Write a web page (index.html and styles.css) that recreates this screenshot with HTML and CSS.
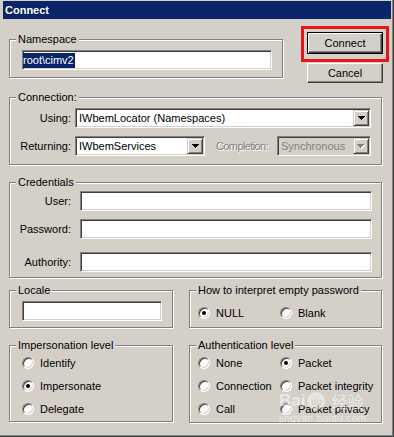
FILE: index.html
```html
<!DOCTYPE html>
<html lang="en">
<head>
  <meta charset="UTF-8" />
  <meta name="viewport" content="width=device-width, initial-scale=1.0"/>
  <title>Connect</title>
  <link rel="stylesheet" href="styles.css">
</head>
<body>

<div class="window">
  <div class="titlebar">Connect</div>

  <div class="content">
    <div class="top-row">
      <fieldset class="group ns-group">
        <legend>Namespace</legend>
        <div class="body ns-body">
          <div class="field ns-field"><span class="sel">root\cimv2</span></div>
        </div>
      </fieldset>

      <div class="buttons">
        <div class="highlight">
          <div class="btn btn-default">Connect</div>
        </div>
        <div class="btn btn-cancel">Cancel</div>
      </div>
    </div>

    <fieldset class="group conn-group">
      <legend>Connection:</legend>
      <div class="body conn-body">
        <div class="row">
          <span class="lbl">Using:</span>
          <div class="combo combo-using">
            <span class="combo-text">IWbemLocator (Namespaces)</span>
            <span class="combo-btn">
              <svg width="7" height="4" viewBox="0 0 7 4"><path d="M0 0h7v1H0zM1 1h5v1H1zM2 2h3v1H2zM3 3h1v1H3z" fill="#000"/></svg>
            </span>
          </div>
        </div>
        <div class="row row-ret">
          <span class="lbl">Returning:</span>
          <div class="combo combo-ret">
            <span class="combo-text">IWbemServices</span>
            <span class="combo-btn">
              <svg width="7" height="4" viewBox="0 0 7 4"><path d="M0 0h7v1H0zM1 1h5v1H1zM2 2h3v1H2zM3 3h1v1H3z" fill="#000"/></svg>
            </span>
          </div>
          <span class="lbl-disabled">Completion:</span>
          <div class="combo combo-compl disabled">
            <span class="combo-text">Synchronous</span>
            <span class="combo-btn">
              <svg width="8" height="5" viewBox="0 0 8 5"><path d="M1 1h7v1H1zM2 2h5v1H2zM3 3h3v1H3zM4 4h1v1H4z" fill="#fff"/><path d="M0 0h7v1H0zM1 1h5v1H1zM2 2h3v1H2zM3 3h1v1H3z" fill="#808080"/></svg>
            </span>
          </div>
        </div>
      </div>
    </fieldset>

    <fieldset class="group cred-group">
      <legend>Credentials</legend>
      <div class="body cred-body">
        <div class="row row-user">
          <span class="lbl lbl-cred">User:</span>
          <div class="field cred-field"></div>
        </div>
        <div class="row row-pass">
          <span class="lbl lbl-cred">Password:</span>
          <div class="field cred-field"></div>
        </div>
        <div class="row row-auth">
          <span class="lbl lbl-cred">Authority:</span>
          <div class="field cred-field"></div>
        </div>
      </div>
    </fieldset>

    <div class="pair pair-1">
      <fieldset class="group left-group small">
        <legend>Locale</legend>
        <div class="body locale-body">
          <div class="field locale-field"></div>
        </div>
      </fieldset>
      <fieldset class="group right-group small">
        <legend>How to interpret empty password</legend>
        <div class="body radio-grid pw-body">
          <div class="opt"><span class="radio on"></span>NULL</div>
          <div class="opt"><span class="radio"></span>Blank</div>
        </div>
      </fieldset>
    </div>

    <div class="pair pair-2">
      <fieldset class="group left-group tall">
        <legend>Impersonation level</legend>
        <div class="body radio-list imp-body">
          <div class="opt"><span class="radio"></span>Identify</div>
          <div class="opt"><span class="radio on"></span>Impersonate</div>
          <div class="opt"><span class="radio"></span>Delegate</div>
        </div>
      </fieldset>
      <fieldset class="group right-group tall auth-group">
        <legend>Authentication level</legend>
        <div class="body radio-grid auth-body">
          <div class="opt"><span class="radio"></span>None</div>
          <div class="opt"><span class="radio on"></span>Packet</div>
          <div class="opt"><span class="radio"></span>Connection</div>
          <div class="opt"><span class="radio"></span>Packet integrity</div>
          <div class="opt"><span class="radio"></span>Call</div>
          <div class="opt"><span class="radio"></span>Packet privacy</div>
        </div>
      </fieldset>
    </div>
  </div>

  <!-- watermark from the screenshot -->
  <div class="watermark">
    <div class="wm-logo"><span>Bai</span><span class="wm-paw">du</span><span class="wm-cn">经验</span></div>
    <div class="wm-url">jingyan.baidu.com</div>
  </div>
</div>

</body>
</html>
```

FILE: styles.css
```css
body {
  margin: 0;
  background: #d4d0c8;
  font-family: "Liberation Sans", Arial, sans-serif;
  font-size: 11px;
  color: #000;
}

.window {
  position: relative;
  width: 394px;
  height: 437px;
  box-sizing: border-box;
  border-right: 1px solid #404040;
  border-bottom: 1px solid #404040;
  box-shadow: inset -1px -1px 0 #808080;
  overflow: hidden;
}

.titlebar {
  margin: 1px 2px 0 3px;
  height: 18px;
  line-height: 18px;
  padding-left: 2px;
  background: #0a246a;
  color: #fff;
  font-weight: bold;
  font-size: 11px;
}

.content {
  padding-left: 9px;
}

/* group boxes */
.group {
  margin: 0;
  padding: 0;
  min-width: 0;
  box-sizing: border-box;
  border: 1px solid #808080;
  box-shadow: inset 1px 1px 0 #fff, 1px 1px 0 #fff;
}

.group legend {
  margin-left: 6px;
  padding: 0 2px;
  line-height: 13px;
  background: #d4d0c8;
}

/* sunken fields */
.field,
.combo {
  box-sizing: border-box;
  height: 20px;
  background: #fff;
  border: 1px solid;
  border-color: #808080 #fff #fff #808080;
  box-shadow: inset 1px 1px 0 #404040, inset -1px -1px 0 #d4d0c8;
}

/* top row */
.top-row {
  display: flex;
  align-items: flex-start;
}

.ns-group {
  margin-top: 14px;
  width: 274px;
  height: 45px;
}

.ns-body {
  padding: 4px 0 0 12px;
}

.ns-field {
  width: 250px;
  display: flex;
  align-items: center;
}

.sel {
  display: inline-block;
  background: #0a246a;
  color: #fff;
  line-height: 15px;
  padding-right: 1px;
}

.buttons {
  margin-left: 18px;
  margin-top: 7px;
}

.highlight {
  width: 88px;
  box-sizing: border-box;
  border: 3px solid #e8141b;
  padding: 3px 3px 5px;
}

.btn {
  box-sizing: border-box;
  width: 76px;
  text-align: center;
  background: #d4d0c8;
}

.btn-default {
  height: 22px;
  line-height: 20px;
  border: 1px solid #000;
  box-shadow: inset 1px 1px 0 #fff, inset -1px -1px 0 #404040, inset -2px -2px 0 #808080;
}

.btn-cancel {
  margin: 1px 0 0 6px;
  height: 20px;
  line-height: 18px;
  border: 1px solid;
  border-color: #fff #404040 #404040 #fff;
  box-shadow: inset -1px -1px 0 #808080;
}

/* connection */
.conn-group {
  margin-top: 8px;
  width: 373px;
  height: 74px;
}

.conn-body {
  padding: 4px 10px 0 0;
}

.row {
  display: flex;
  align-items: center;
}

.row-ret {
  margin-top: 8px;
}

.lbl {
  width: 61px;
  margin-right: 4px;
  text-align: right;
}

.combo {
  display: flex;
  align-items: center;
  padding: 1px;
}

.combo-text {
  flex: 1;
  padding-left: 2px;
  white-space: nowrap;
  overflow: hidden;
}

.combo-btn {
  width: 16px;
  height: 16px;
  box-sizing: border-box;
  display: flex;
  align-items: center;
  justify-content: center;
  background: #d4d0c8;
  border: 1px solid;
  border-color: #d4d0c8 #404040 #404040 #d4d0c8;
  box-shadow: inset 1px 1px 0 #fff, inset -1px -1px 0 #808080;
}

.combo-using {
  width: 296px;
}

.combo-ret {
  width: 130px;
}

.lbl-disabled {
  margin-left: 11px;
  color: #808080;
  letter-spacing: -0.6px;
  text-shadow: 1px 1px 0 #fff;
}

.combo-compl {
  margin-left: auto;
  width: 94px;
}

.combo.disabled {
  background: #d4d0c8;
  color: #808080;
}

/* credentials */
.cred-group {
  margin-top: 11px;
  width: 373px;
  height: 102px;
}

.cred-body {
  padding-top: 2px;
}

.lbl-cred {
  margin-right: 9px;
}

.cred-field {
  width: 292px;
}

.row-pass {
  margin-top: 8px;
}

.row-auth {
  margin-top: 13px;
}

/* bottom pairs */
.pair {
  display: flex;
  align-items: flex-start;
}

.pair-1 {
  margin-top: 6px;
}

.pair-2 {
  margin-top: 11px;
}

.left-group {
  width: 164px;
}

.right-group {
  margin-left: 16px;
  width: 193px;
}

.small {
  height: 44px;
}

.tall {
  height: 83px;
}

.auth-group {
  height: 84px;
}

.locale-body {
  padding: 4px 0 0 12px;
}

.locale-field {
  width: 140px;
}

.opt {
  display: flex;
  align-items: center;
  height: 16px;
  white-space: nowrap;
}

.radio {
  position: relative;
  flex: none;
  width: 12px;
  height: 12px;
  margin-right: 6px;
  box-sizing: border-box;
  border-radius: 50%;
  background: #fff;
  border: 1px solid;
  border-color: #808080 #fff #fff #808080;
  box-shadow: inset 1px 1px 0 #404040, inset -1px -1px 0 #d4d0c8;
}

.radio.on::after {
  content: "";
  position: absolute;
  left: 3px;
  top: 3px;
  width: 4px;
  height: 4px;
  border-radius: 50%;
  background: #000;
}

.radio-grid {
  display: grid;
  grid-template-columns: 82px 1fr;
  row-gap: 7px;
  padding: 3px 0 0 8px;
}

.pw-body {
  padding-top: 8px;
}

.radio-list {
  display: flex;
  flex-direction: column;
  gap: 7px;
  padding: 3px 0 0 12px;
}

/* watermark */
.watermark {
  position: absolute;
  left: 279px;
  top: 392px;
  color: rgba(255, 255, 255, 0.55);
  pointer-events: none;
}

.wm-logo {
  display: flex;
  align-items: center;
  gap: 2px;
  font-size: 17px;
  font-weight: bold;
  line-height: 18px;
}

.wm-paw {
  display: inline-block;
  width: 18px;
  height: 18px;
  border-radius: 50%;
  background: rgba(255, 255, 255, 0.45);
  color: #d4d0c8;
  font-size: 9px;
  line-height: 20px;
  text-align: center;
}

.wm-cn {
  margin-left: 4px;
  font-family: "Noto Sans CJK SC", sans-serif;
  font-weight: normal;
  font-size: 16px;
}

.wm-url {
  margin-top: 3px;
  font-size: 10px;
  letter-spacing: 0.4px;
}
```
